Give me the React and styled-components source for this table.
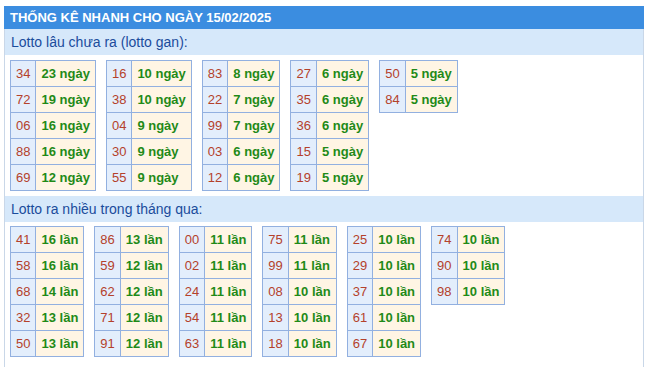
import React from 'react';
import styled, { createGlobalStyle } from 'styled-components';

const GlobalStyle = createGlobalStyle`
    body {
        margin: 0;
        background: #ffffff;
        font-family: "Liberation Sans", Arial, sans-serif;
    }
`

const gan = [
    [['34', '23'], ['72', '19'], ['06', '16'], ['88', '16'], ['69', '12']],
    [['16', '10'], ['38', '10'], ['04', '9'], ['30', '9'], ['55', '9']],
    [['83', '8'], ['22', '7'], ['99', '7'], ['03', '6'], ['12', '6']],
    [['27', '6'], ['35', '6'], ['36', '6'], ['15', '5'], ['19', '5']],
    [['50', '5'], ['84', '5']],
];

const nhieu = [
    [['41', '16'], ['58', '16'], ['68', '14'], ['32', '13'], ['50', '13']],
    [['86', '13'], ['59', '12'], ['62', '12'], ['71', '12'], ['91', '12']],
    [['00', '11'], ['02', '11'], ['24', '11'], ['54', '11'], ['63', '11']],
    [['75', '11'], ['99', '11'], ['08', '10'], ['13', '10'], ['18', '10']],
    [['25', '10'], ['29', '10'], ['37', '10'], ['61', '10'], ['67', '10']],
    [['74', '10'], ['90', '10'], ['98', '10']],
];

function Section({ title, groups, unit, top }) {
    return (
        <>
            <SubTitle>{title}</SubTitle>
            <Tables $top={top}>
                {groups.map((rows, i) => (
                    <Table key={i}>
                        <tbody>
                            {rows.map(([num, count]) => (
                                <tr key={num}>
                                    <Num>{num}</Num>
                                    <Count>{count} {unit}</Count>
                                </tr>
                            ))}
                        </tbody>
                    </Table>
                ))}
            </Tables>
        </>
    )
}

function App() {
    return (
        <Page>
            <GlobalStyle />
            <Box>
                <Title>THỐNG KÊ NHANH CHO NGÀY 15/02/2025</Title>
                <Body>
                    <Section title="Lotto lâu chưa ra (lotto gan):" groups={gan} unit="ngày" top={5} />
                    <Section title="Lotto ra nhiều trong tháng qua:" groups={nhieu} unit="lần" top={4} />
                </Body>
            </Box>
        </Page>
    )
}

const Page = styled.div`
    padding: 6px 0 0 4px;
`

const Box = styled.div`
    width: 640px;
`

const Title = styled.div`
    height: 23px;
    line-height: 23px;
    padding-left: 6px;
    background: #3b8de0;
    color: #ffffff;
    font-size: 13px;
    font-weight: 700;
`

const Body = styled.div`
    border-left: 1px solid #c9d7e8;
    border-right: 1px solid #c9d7e8;
    padding-bottom: 5px;
`

const SubTitle = styled.div`
    height: 26px;
    line-height: 26px;
    padding-left: 6px;
    background: #d6e8fa;
    color: #1b4c9c;
    font-size: 14px;
`

const Tables = styled.div`
    display: flex;
    align-items: flex-start;
    gap: 10px;
    padding: ${p => p.$top}px 0 5px 5px;
`

const Table = styled.table`
    border-collapse: collapse;
    font-size: 13px;

    td {
        height: 25px;
        padding: 0 5px;
        border: 1px solid #92b0e0;
        white-space: nowrap;
    }
`

const Num = styled.td`
    background: #e3eefc;
    color: #b4412b;
`

const Count = styled.td`
    background: #fff5e4;
    color: #1f8a18;
    font-weight: 700;
`

export default App;
